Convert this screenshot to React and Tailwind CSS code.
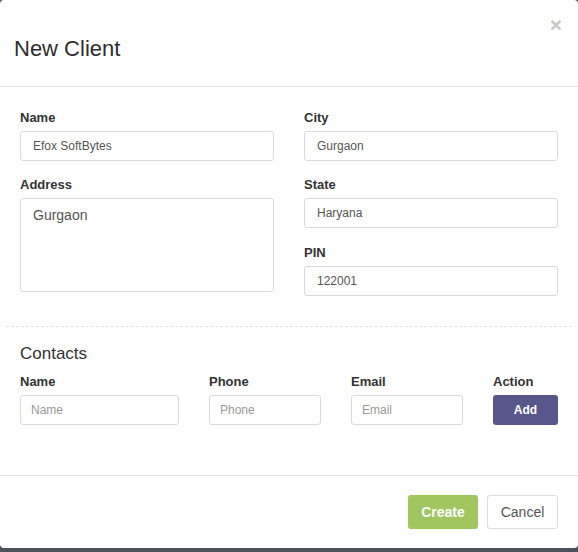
import React from 'react';

const font = { fontFamily: '"Liberation Sans", Arial, sans-serif' };

function Field({ label, value, className = '' }) {
  return (
    <div className={className}>
      <label className="block text-[13px] font-bold leading-[16px] text-[#333] mb-[5px]">{label}</label>
      <input
        type="text"
        defaultValue={value}
        className="block w-full h-[30px] rounded-[3px] border border-[#d9d9e3] bg-white px-[12px] text-[12px] text-[#555] focus:outline-none"
      />
    </div>
  );
}

function ContactField({ label, placeholder, width }) {
  return (
    <div className={width}>
      <label className="block text-[13px] font-bold leading-[16px] text-[#333] mb-[5px]">{label}</label>
      <input
        type="text"
        placeholder={placeholder}
        className="block w-full h-[30px] rounded-[3px] border border-[#d9d9e3] bg-white px-[10px] text-[12px] text-[#555] placeholder:text-[#999] focus:outline-none"
      />
    </div>
  );
}

export default function App() {
  return (
    <div className="w-[578px] h-[552px] bg-[#4b525c] overflow-hidden" style={font}>
      <div className="h-[548px] bg-white rounded-[4px] flex flex-col">
        {/* header */}
        <div className="relative h-[87px] border-b border-[#e5e5e5] px-[14px] pt-[35px]">
          <h2 className="text-[22px] leading-[28px] font-medium text-[#2d2d2d]">New Client</h2>
          <button className="absolute right-[16px] top-[11px] text-[21px] font-bold leading-[28px] text-[#c6c6c6]">×</button>
        </div>

        {/* body */}
        <div className="px-[20px] pt-[23px]">
          <div className="grid grid-cols-2 gap-x-[30px]">
            <div className="flex flex-col gap-[16px]">
              <Field label="Name" value="Efox SoftBytes" />
              <div>
                <label className="block text-[13px] font-bold leading-[16px] text-[#333] mb-[5px]">Address</label>
                <textarea
                  defaultValue="Gurgaon"
                  className="block w-full h-[94px] resize-none rounded-[3px] border border-[#d9d9e3] bg-white px-[12px] py-[7px] text-[14px] leading-[18px] text-[#555] focus:outline-none"
                />
              </div>
            </div>
            <div className="flex flex-col gap-[16px]">
              <Field label="City" value="Gurgaon" />
              <Field label="State" value="Haryana" />
              <Field label="PIN" value="122001" className="mt-[1px]" />
            </div>
          </div>
        </div>

        <div className="mx-[6px] mt-[30px] border-t border-dashed border-[#e3e3e3]" />

        <div className="px-[20px] pt-[17px]">
          <h3 className="text-[17px] leading-[20px] font-medium text-[#333] mb-[10px]">Contacts</h3>
          <div className="flex gap-[30px]">
            <ContactField label="Name" placeholder="Name" width="w-[159px]" />
            <ContactField label="Phone" placeholder="Phone" width="w-[112px]" />
            <ContactField label="Email" placeholder="Email" width="w-[112px]" />
            <div className="w-[65px]">
              <label className="block text-[13px] font-bold leading-[16px] text-[#333] mb-[5px]">Action</label>
              <button className="w-full h-[30px] rounded-[3px] bg-[#58578b] text-white text-[12px] font-bold">Add</button>
            </div>
          </div>
        </div>

        {/* footer */}
        <div className="mt-[50px] border-t border-[#e5e5e5] px-[20px] pt-[19px] flex justify-end gap-[9px]">
          <button className="w-[70px] h-[34px] rounded-[3px] bg-[#a0c75f] text-white text-[14px] font-bold">Create</button>
          <button className="w-[71px] h-[34px] rounded-[3px] border border-[#dddde3] bg-white text-[#555] text-[14px]">Cancel</button>
        </div>
      </div>
    </div>
  );
}
